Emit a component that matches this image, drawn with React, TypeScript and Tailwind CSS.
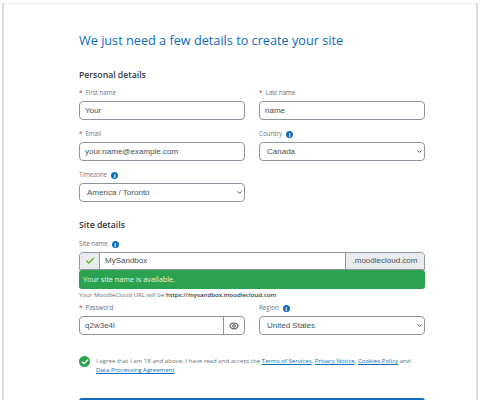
import React from 'react';
import { Check, ChevronDown, Eye } from 'lucide-react';

function Info() {
  return (
    <span className="ml-[4px] inline-flex h-[7px] w-[7px] items-center justify-center rounded-full bg-[#0f6cbf] font-['Open_Sans',sans-serif] text-[6px] font-bold leading-none text-white">
      i
    </span>
  );
}

function Label({ text, required, info }: { text: string; required?: boolean; info?: boolean }) {
  return (
    <div className="flex h-[16px] items-center pt-[1px] font-['Open_Sans',sans-serif] text-[6.2px] leading-none text-[#6a737b]">
      {required && <span className="mr-[3px] text-[#ca3120]">*</span>}
      {text}
      {info && <Info />}
    </div>
  );
}

const fieldClass =
  "block h-[19px] w-full rounded-[4px] border border-[#8f959e] bg-white px-[5px] font-['Liberation_Sans',sans-serif] text-[8px] text-[#495057] outline-none";

function TextField({ label, value, required }: { label: string; value: string; required?: boolean }) {
  return (
    <div>
      <Label text={label} required={required} />
      <input readOnly value={value} className={fieldClass} />
    </div>
  );
}

function SelectField({ label, value, info }: { label: string; value: string; info?: boolean }) {
  return (
    <div>
      <Label text={label} info={info} />
      <div className="relative">
        <select value={value} onChange={() => {}} className={fieldClass + ' appearance-none pl-[7px]'}>
          <option>{value}</option>
        </select>
        <ChevronDown size={7} strokeWidth={3} className="pointer-events-none absolute right-[2px] top-[6px] text-[#343a40]" />
      </div>
    </div>
  );
}

export default function App() {
  return (
    <div className="h-[400px] overflow-hidden bg-white px-[2px] pt-[3px]">
      <div className="h-[420px] border-x-2 border-t border-x-[#dcdcdc] border-t-[#efefef] bg-white pl-[75px] pr-[51px]">
        <h1 className="pt-[25px] font-['Open_Sans',sans-serif] text-[12.7px] leading-[22px] text-[#0f6cbf]">
          We just need a few details to create your site
        </h1>

        <h2 className="pt-[17px] font-['Open_Sans',sans-serif] text-[8.7px] font-semibold leading-[14px] text-[#343a40]">
          Personal details
        </h2>
        <div className="mt-[3px] grid grid-cols-2 gap-x-[14px] gap-y-[6px]">
          <TextField label="First name" value="Your" required />
          <TextField label="Last name" value="name" required />
          <TextField label="Email" value="your.name@example.com" required />
          <SelectField label="Country" value="Canada" info />
          <SelectField label="Timezone" value="America / Toronto" info />
        </div>

        <h2 className="pt-[16px] font-['Open_Sans',sans-serif] text-[8.7px] font-semibold leading-[14px] text-[#343a40]">
          Site details
        </h2>
        <div className="mt-[4px]">
          <Label text="Site name" info />
        </div>
        <div className="flex h-[18px] rounded-t-[4px] border border-[#8f959e] bg-white font-['Liberation_Sans',sans-serif] text-[8px] text-[#495057]">
          <span className="flex w-[20px] items-center justify-center rounded-tl-[4px] border-r border-[#8f959e] bg-[#e9ecef]">
            <Check size={10} strokeWidth={3} className="text-[#5fa80f]" />
          </span>
          <span className="flex flex-1 items-center pl-[5px]">MySandbox</span>
          <span className="flex w-[79px] items-center justify-center rounded-tr-[4px] border-l border-[#8f959e] bg-[#e9ecef]">
            .moodlecloud.com
          </span>
        </div>
        <div className="flex h-[19px] items-center rounded-[3px] bg-[#2ba24f] pl-[4px] font-['Open_Sans',sans-serif] text-[7.3px] text-[#e5f5ea]">
          Your site name is available.
        </div>
        <p className="font-['Open_Sans',sans-serif] text-[6.1px] leading-[12px] text-[#6a737b]">
          Your MoodleCloud URL will be <b className="font-semibold text-[#343a40]">https://mysandbox.moodlecloud.com</b>
        </p>

        <div className="-mt-[1px] grid grid-cols-2 gap-x-[14px]">
          <div>
            <Label text="Password" required />
            <div className="flex h-[19px] rounded-[4px] border border-[#8f959e] bg-white font-['Liberation_Sans',sans-serif] text-[8px] text-[#495057]">
              <span className="flex flex-1 items-center pl-[5px]">q2w3e4l</span>
              <span className="flex w-[21px] items-center justify-center border-l border-[#8f959e]">
                <Eye size={10} strokeWidth={2.5} className="text-[#495057]" />
              </span>
            </div>
          </div>
          <SelectField label="Region" value="United States" info />
        </div>

        <div className="mt-[21px] flex items-start gap-[6px]">
          <span className="flex h-[11px] w-[11px] shrink-0 items-center justify-center rounded-full bg-[#2ba24f]">
            <Check size={8} strokeWidth={4} className="text-white" />
          </span>
          <p className="max-w-[320px] font-['Open_Sans',sans-serif] text-[6.1px] leading-[9.4px] text-[#6a737b]">
            I agree that I am 18 and above, I have read and accept the{' '}
            <a className="text-[#0f6cbf] underline">Terms of Services</a>,{' '}
            <a className="text-[#0f6cbf] underline">Privacy Notice</a>,{' '}
            <a className="text-[#0f6cbf] underline">Cookies Policy</a> and{' '}
            <a className="text-[#0f6cbf] underline">Data Processing Agreement</a>
          </p>
        </div>

        <div className="mt-[23px] h-[19px] rounded-t-[3px] bg-[#0f6cbf]" />
      </div>
    </div>
  );
}
